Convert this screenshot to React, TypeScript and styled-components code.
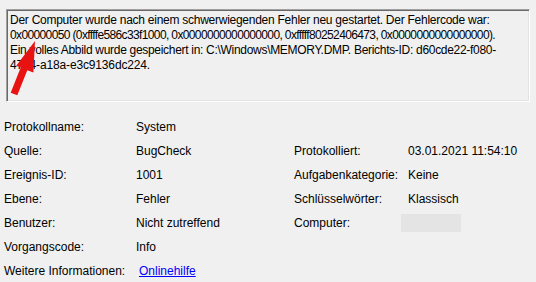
import * as React from "react";
import styled, { createGlobalStyle } from "styled-components";

const GlobalStyle = createGlobalStyle`
  html, body {
    margin: 0;
    padding: 0;
    background: #f0f0f0;
  }
  body {
    font-family: "Liberation Sans", Arial, sans-serif;
    font-size: 12px;
    color: #000;
  }
`;

const Page = styled.div`
  width: 536px;
  height: 282px;
  overflow: hidden;
  padding-top: 9px;
  box-sizing: border-box;
`;

const DescriptionBox = styled.div`
  position: relative;
  margin-left: 6px;
  width: 524px;
  height: 93px;
  box-sizing: border-box;
  border: 1px solid;
  border-color: #a0a0a0 #ffffff #ffffff #a0a0a0;
  box-shadow: inset 1px 1px 0 #696969, inset -1px -1px 0 #e3e3e3;
  padding: 3px 2px 0 3px;
  line-height: 15px;
  overflow: hidden;
`;

const Line = styled.div<{ $spacing?: number }>`
  white-space: nowrap;
  letter-spacing: ${(p) => p.$spacing ?? -0.15}px;
`;

const Arrow = styled.svg`
  position: absolute;
  left: -7px;
  top: -10px;
  pointer-events: none;
`;

const Details = styled.div`
  display: grid;
  grid-template-columns: 132px 158px 114px 1fr;
  grid-auto-rows: 24px;
  align-items: center;
  padding: 3px 0 0 4px;
  margin-top: 10px;
`;

const Label = styled.div<{ $col?: number }>`
  grid-column: ${(p) => p.$col ?? 1};
  white-space: nowrap;
`;

const Value = styled.div<{ $col?: number; $span?: number }>`
  grid-column: ${(p) => p.$col ?? 2} / span ${(p) => p.$span ?? 1};
  white-space: nowrap;
`;

const Link = styled.a`
  color: #0000ff;
  text-decoration: underline;
  margin-left: 3px;
  cursor: pointer;
`;

const ReadOnlyField = styled.div`
  width: 60px;
  height: 18px;
  margin-left: -7px;
  background: #e4e4e4;
`;

const rows = [
  { label: "Protokollname:", value: "System" },
  { label: "Quelle:", value: "BugCheck", label2: "Protokolliert:", value2: "03.01.2021 11:54:10" },
  { label: "Ereignis-ID:", value: "1001", label2: "Aufgabenkategorie:", value2: "Keine" },
  { label: "Ebene:", value: "Fehler", label2: "Schlüsselwörter:", value2: "Klassisch" },
  { label: "Benutzer:", value: "Nicht zutreffend", label2: "Computer:", value2: null },
  { label: "Vorgangscode:", value: "Info" },
];

export default function App() {
  return (
    <Page>
      <GlobalStyle />
      <DescriptionBox>
        <Line $spacing={-0.26}>
          Der Computer wurde nach einem schwerwiegenden Fehler neu gestartet. Der Fehlercode war:
        </Line>
        <Line $spacing={-0.63}>
          0x00000050 (0xffffe586c33f1000, 0x0000000000000000, 0xfffff80252406473, 0x0000000000000000).
        </Line>
        <Line $spacing={-0.3}>
          Ein volles Abbild wurde gespeichert in: C:\Windows\MEMORY.DMP. Berichts-ID: d60cde22-f080-
        </Line>
        <Line>47e4-a18a-e3c9136dc224.</Line>
        <Arrow width="60" height="110" viewBox="0 0 60 110">
          <polygon
            points="10.7,92.7 20.7,67.6 16.2,65.8 35,41 33.4,72.6 27.3,70.2 17.3,95.3"
            fill="#e81212"
          />
        </Arrow>
      </DescriptionBox>
      <Details>
        {rows.map((r, i) => (
          <React.Fragment key={i}>
            <Label>{r.label}</Label>
            <Value $span={r.label2 ? 1 : 3}>{r.value}</Value>
            {r.label2 && <Label $col={3}>{r.label2}</Label>}
            {r.label2 && (
              <Value $col={4}>{r.value2 ?? <ReadOnlyField />}</Value>
            )}
          </React.Fragment>
        ))}
        <Label>Weitere Informationen:</Label>
        <Value $span={3}>
          <Link>Onlinehilfe</Link>
        </Value>
      </Details>
    </Page>
  );
}
